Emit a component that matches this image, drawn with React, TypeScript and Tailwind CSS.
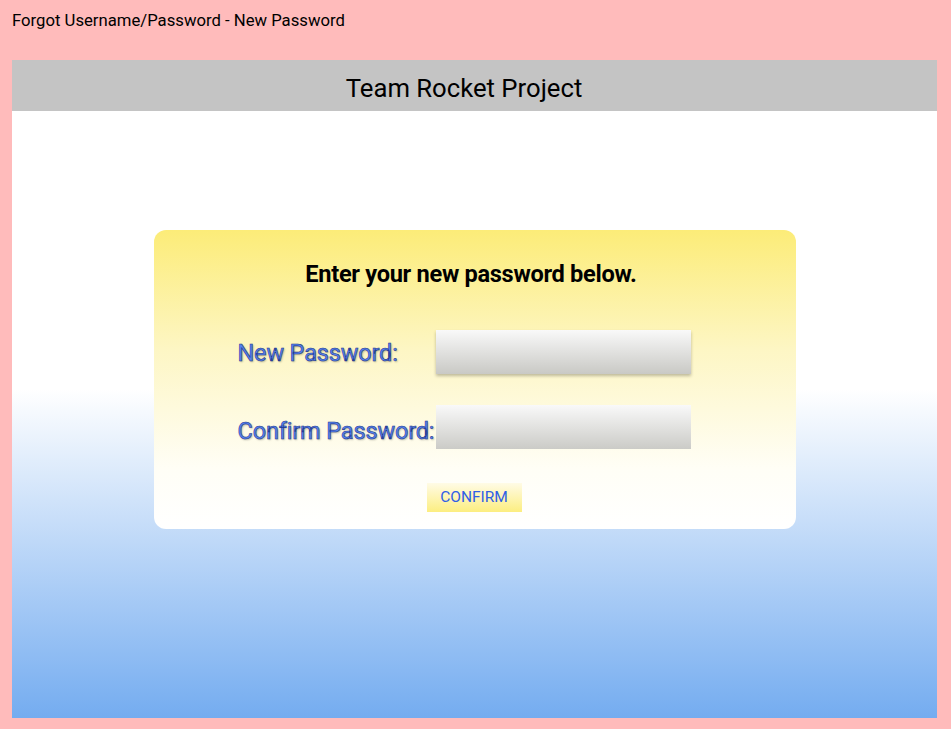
import React from "react";

export default function App() {
  const labelCls =
    "text-[23.5px] leading-[28px] text-[#5583f0] [-webkit-text-stroke:0.6px_#1f358c] [text-shadow:1px_1px_2px_rgba(0,0,0,0.3)] tracking-[-0.15px]";
  return (
    <div className="min-h-[729px] bg-[#ffbbbb] font-['Roboto',sans-serif] pt-[9px]">
      <div className="pl-[12px] text-[16.7px] leading-[24px] text-black">
        Forgot Username/Password - New Password
      </div>
      <div className="mt-[27px] ml-[12px] w-[925px] h-[658px] bg-[linear-gradient(180deg,#ffffff_50%,#74acf0_100%)] flex flex-col">
        <div className="h-[51px] bg-[#c4c4c4] flex items-center justify-center text-[25.7px] text-black pt-[5px] pr-[21px]">
          Team Rocket Project
        </div>
        <div className="flex justify-center pt-[119px]">
          <div className="w-[642px] h-[299px] rounded-[12px] bg-[linear-gradient(180deg,#fcec78_0%,#fdf6c4_40%,#fffef6_80%,#ffffff_100%)] flex flex-col items-center pt-[30px]">
            <div className="text-[23.6px] leading-[28px] font-bold text-black tracking-[-0.3px] mr-[7px]">
              Enter your new password below.
            </div>
            <div className="mt-[42px] self-start ml-[84px] flex flex-col gap-[31px]">
              <div className="flex items-center">
                <div className="w-[198px] pt-[2px] whitespace-nowrap">
                  <span className={labelCls}>New Password:</span>
                </div>
                <div className="w-[255px] h-[44px] bg-[linear-gradient(180deg,#f9f9f9_0%,#c9c9c5_100%)] shadow-[0_2px_3px_rgba(0,0,0,0.25)]" />
              </div>
              <div className="flex items-center">
                <div className="w-[198px] pt-[9px] whitespace-nowrap">
                  <span className={labelCls}>Confirm Password:</span>
                </div>
                <div className="w-[255px] h-[44px] bg-[linear-gradient(180deg,#f9f9f9_0%,#cbcbc7_100%)]" />
              </div>
            </div>
            <button className="mt-[34px] w-[95px] h-[29px] bg-[linear-gradient(180deg,#fffbe6_0%,#fcee80_100%)] text-[#2f60e6] text-[15.5px] leading-[29px] ml-[-1px]">
              CONFIRM
            </button>
          </div>
        </div>
      </div>
    </div>
  );
}
